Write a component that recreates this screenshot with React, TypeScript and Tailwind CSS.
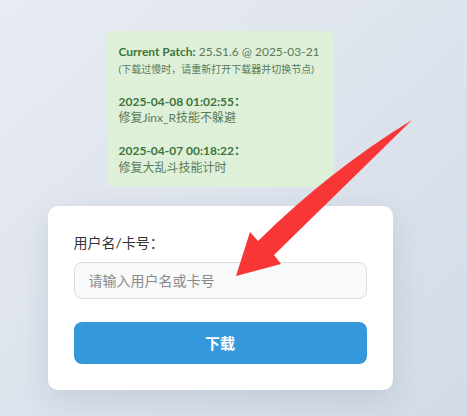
import React from 'react';

const font = { fontFamily: 'Lato, "Noto Sans CJK SC", sans-serif' };

function Arrow() {
  return (
    <svg
      className="absolute left-0 top-0 pointer-events-none"
      width="467"
      height="416"
      viewBox="0 0 467 416"
    >
      <path
        d="M412 120 L274 255 L281 264 L236 276 L250 232 L258 241 Q330 170 412 120 Z"
        fill="#f93636"
      />
    </svg>
  );
}

export default function App() {
  return (
    <div
      className="relative min-h-[416px] w-full bg-gradient-to-br from-[#e8ecf2] to-[#d3dbe7] pr-[27px] pt-[31px] flex flex-col items-center"
      style={font}
    >
      <div className="w-[227px] rounded-[6px] bg-[#dff0d8] px-[12px] pt-[13px] pb-[11px] text-[12px] leading-[16.5px] text-[#5a7a58]">
        <div className="whitespace-nowrap">
          <b className="font-bold text-[#3c763d]">Current Patch:</b> 25.S1.6 @ 2025-03-21
        </div>
        <div className="h-[16.5px] whitespace-nowrap text-[10px]">(下载过慢时，请重新打开下载器并切换节点)</div>
        <div className="h-[16.5px]" />
        <div className="h-[16.5px] font-bold text-[#3c763d]">2025-04-08 01:02:55：</div>
        <div className="h-[16.5px]">修复Jinx_R技能不躲避</div>
        <div className="h-[16.5px]" />
        <div className="h-[16.5px] font-bold text-[#3c763d]">2025-04-07 00:18:22：</div>
        <div className="h-[16.5px]">修复大乱斗技能计时</div>
      </div>

      <div className="mt-[19px] w-[345px] rounded-[10px] bg-white px-[26px] pt-[27px] pb-[26px] shadow-[0_10px_30px_rgba(40,60,100,0.12)]">
        <label className="block h-[20px] text-[14px] leading-[20px] text-[#333]">用户名/卡号：</label>
        <input
          className="mt-[9px] block h-[37px] w-full rounded-[8px] border border-[#dcdcdc] bg-[#f8f9fa] px-[14px] text-[14px] text-[#333] placeholder:text-[#8a8a8a] outline-none"
          placeholder="请输入用户名或卡号"
        />
        <button className="mt-[23px] block h-[42px] w-full rounded-[8px] bg-[#3498db] text-[15px] font-bold text-white">
          下载
        </button>
      </div>

      <Arrow />
    </div>
  );
}
